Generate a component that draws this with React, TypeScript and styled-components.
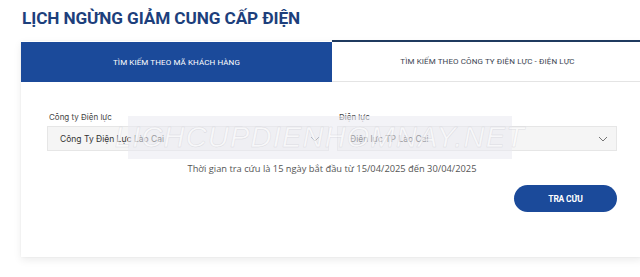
import React from "react";
import styled, { createGlobalStyle } from "styled-components";

const Global = createGlobalStyle`
  html, body { margin: 0; padding: 0; background: #fff; overflow: hidden; }
  body { font-family: "Open Sans", "Noto Sans", sans-serif; }
  * { box-sizing: border-box; }
`;

const Page = styled.div`
  width: 640px;
  height: 277px;
  padding: 7px 0 0 21px;
  overflow: hidden;
  position: relative;
`;

const Title = styled.h1`
  margin: 0 0 0 1px;
  font-family: "Roboto", "Noto Sans", sans-serif;
  font-weight: 700;
  font-size: 17.2px;
  line-height: 22px;
  color: #1d3f7c;
  letter-spacing: -0.1px;
`;

const Card = styled.div`
  margin-top: 12px;
  width: 622px;
  height: 216px;
  background: #fff;
  box-shadow: 0 3px 8px rgba(0, 0, 0, 0.08), 0 0 2px rgba(0, 0, 0, 0.05);
  position: relative;
`;

const Tabs = styled.div`
  display: grid;
  grid-template-columns: 311px 311px;
  height: 42px;
`;

const Tab = styled.div<{ $active?: boolean }>`
  display: flex;
  align-items: center;
  justify-content: center;
  font-family: "Roboto", sans-serif;
  font-size: 8px;
  letter-spacing: 0.1px;
  background: ${(p) => (p.$active ? "#1b4a9a" : "#fff")};
  color: ${(p) => (p.$active ? "#fff" : "#3c4452")};
  border-top: ${(p) => (p.$active ? "0" : "2px solid #1f3a5f")};
  border-bottom: ${(p) => (p.$active ? "0" : "1px solid #e4e4e4")};
  margin-top: ${(p) => (p.$active ? "1px" : "-1px")};
  height: ${(p) => (p.$active ? "40px" : "42px")};
`;

const Body = styled.div`
  padding: 29px 26px 0 26px;
`;

const Fields = styled.div`
  display: grid;
  grid-template-columns: 282px 280px;
  gap: 8px;
`;

const Field = styled.div`
  display: flex;
  flex-direction: column;
`;

const Label = styled.label`
  font-family: "Inter", sans-serif;
  font-size: 8px;
  color: #444;
  line-height: 11px;
  margin-bottom: 3px;
  padding-left: 2px;
`;

const Select = styled.div`
  height: 25px;
  border: 1px solid #e6e6e6;
  background: #f5f5f5;
  display: flex;
  align-items: center;
  justify-content: space-between;
  padding: 0 8px 0 12px;
  font-family: "Inter", sans-serif;
  font-size: 8.5px;
  color: #333;
`;

const Note = styled.p`
  margin: 11px 0 0 0;
  text-align: center;
  font-family: "Open Sans", sans-serif;
  font-size: 9.3px;
  color: #555;
`;

const Actions = styled.div`
  display: flex;
  justify-content: flex-end;
  margin-top: 10px;
`;

const Button = styled.button`
  width: 103px;
  height: 27px;
  border: 0;
  border-radius: 14px;
  background: #1b4a9a;
  color: #fff;
  font-family: "Roboto", sans-serif;
  font-weight: 700;
  font-size: 8.5px;
  letter-spacing: -0.2px;
`;

const Watermark = styled.div`
  position: absolute;
  left: 128px;
  top: 116px;
  width: 384px;
  height: 43px;
  background: rgba(234, 234, 240, 0.55);
  display: flex;
  align-items: center;
  justify-content: center;
  font-family: "Liberation Sans", sans-serif;
  font-style: italic;
  font-size: 29px;
  letter-spacing: 1.2px;
  color: rgba(255, 255, 255, 0.55);
  -webkit-text-stroke: 0.5px rgba(190, 190, 200, 0.45);
  pointer-events: none;
`;

const Chevron = () => (
  <svg width="10" height="6" viewBox="0 0 10 6" fill="none">
    <path d="M1 1l4 4 4-4" stroke="#666" strokeWidth="0.9" />
  </svg>
);

export default function App() {
  return (
    <>
      <Global />
      <Page>
        <Title>LỊCH NGỪNG GIẢM CUNG CẤP ĐIỆN</Title>
        <Card>
          <Tabs>
            <Tab $active>TÌM KIẾM THEO MÃ KHÁCH HÀNG</Tab>
            <Tab>TÌM KIẾM THEO CÔNG TY ĐIỆN LỰC - ĐIỆN LỰC</Tab>
          </Tabs>
          <Body>
            <Fields>
              <Field>
                <Label>Công ty Điện lực</Label>
                <Select>
                  <span>Công Ty Điện Lực Lào Cai</span>
                  <Chevron />
                </Select>
              </Field>
              <Field>
                <Label>Điện lực</Label>
                <Select>
                  <span>Điện lực TP Lào Cai</span>
                  <Chevron />
                </Select>
              </Field>
            </Fields>
            <Note>Thời gian tra cứu là 15 ngày bắt đầu từ 15/04/2025 đến 30/04/2025</Note>
            <Actions>
              <Button>TRA CỨU</Button>
            </Actions>
          </Body>
        </Card>
        <Watermark>LICHCUPDIENHOMNAY.NET</Watermark>
      </Page>
    </>
  );
}
